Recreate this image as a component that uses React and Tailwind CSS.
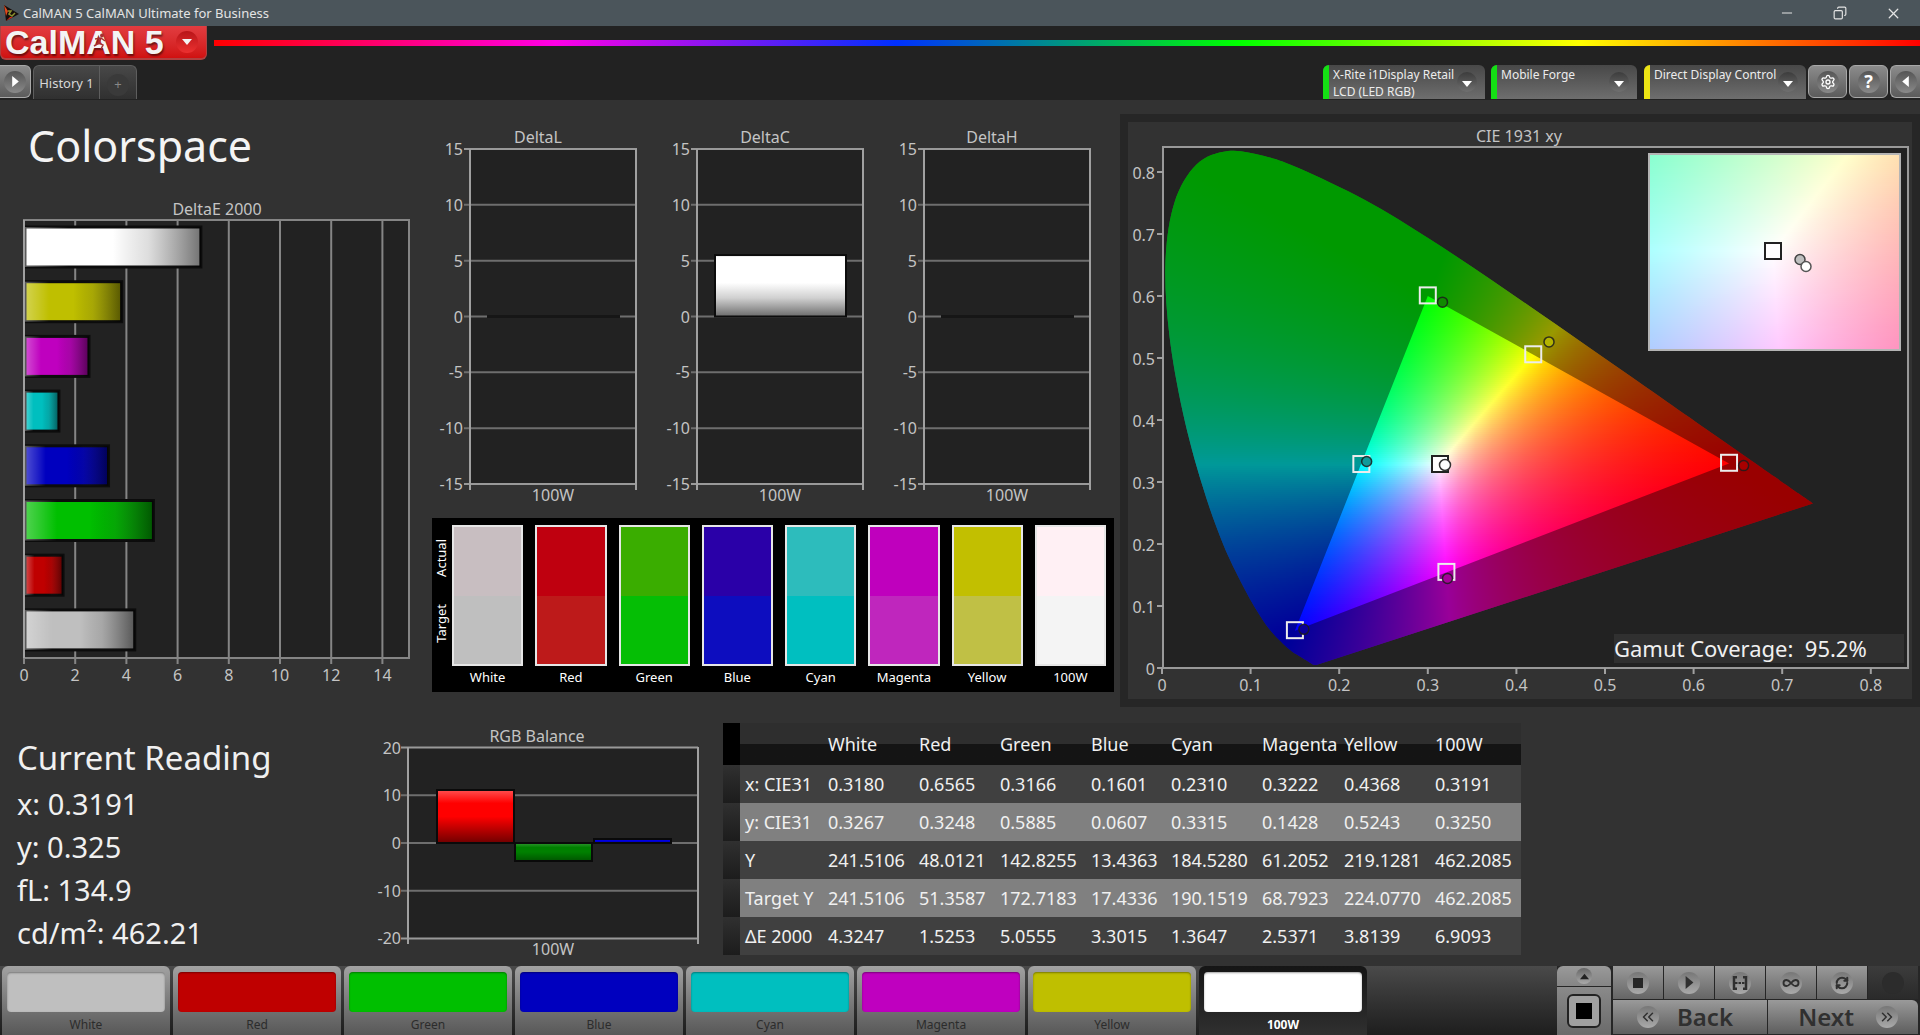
import React, { useMemo } from "react";
import { Minus, X, Copy, Settings, ChevronsLeft, ChevronsRight, RefreshCw, Infinity as InfinityIcon } from "lucide-react";

const BARS = [
  { name: "100W", color: "#ffffff", value: 6.9093 },
  { name: "Yellow", color: "#bfbf00", value: 3.8139 },
  { name: "Magenta", color: "#bf00bf", value: 2.5371 },
  { name: "Cyan", color: "#00bfbf", value: 1.3647 },
  { name: "Blue", color: "#0000bf", value: 3.3015 },
  { name: "Green", color: "#00bf00", value: 5.0555 },
  { name: "Red", color: "#bf0000", value: 1.5253 },
  { name: "White", color: "#bfbfbf", value: 4.3247 },
];

const SWATCHES = [
  { name: "White", actual: "bg-[#c8bec1]", target: "bg-[#bfbfbf]" },
  { name: "Red", actual: "bg-[#bf000f]", target: "bg-[#bd1a1a]" },
  { name: "Green", actual: "bg-[#3aad00]", target: "bg-[#05be05]" },
  { name: "Blue", actual: "bg-[#2a00a8]", target: "bg-[#0d0dbf]" },
  { name: "Cyan", actual: "bg-[#2dbcbc]", target: "bg-[#00bfc0]" },
  { name: "Magenta", actual: "bg-[#bf00bd]", target: "bg-[#bf26bd]" },
  { name: "Yellow", actual: "bg-[#c2bf00]", target: "bg-[#c0c045]" },
  { name: "100W", actual: "bg-[#fff0f4]", target: "bg-[#f4f4f4]" },
];

const PATTERNS = [
  { name: "White", color: "bg-[#bfbfbf]" },
  { name: "Red", color: "bg-[#bf0000]" },
  { name: "Green", color: "bg-[#00bf00]" },
  { name: "Blue", color: "bg-[#0000bf]" },
  { name: "Cyan", color: "bg-[#00bfbf]" },
  { name: "Magenta", color: "bg-[#bf00bf]" },
  { name: "Yellow", color: "bg-[#bfbf00]" },
  { name: "100W", color: "bg-white", active: true },
];

const COLUMNS = ["White", "Red", "Green", "Blue", "Cyan", "Magenta", "Yellow", "100W"];
const ROWS = [
  ["x: CIE31", "0.3180", "0.6565", "0.3166", "0.1601", "0.2310", "0.3222", "0.4368", "0.3191"],
  ["y: CIE31", "0.3267", "0.3248", "0.5885", "0.0607", "0.3315", "0.1428", "0.5243", "0.3250"],
  ["Y", "241.5106", "48.0121", "142.8255", "13.4363", "184.5280", "61.2052", "219.1281", "462.2085"],
  ["Target Y", "241.5106", "51.3587", "172.7183", "17.4336", "190.1519", "68.7923", "224.0770", "462.2085"],
  ["ΔE 2000", "4.3247", "1.5253", "5.0555", "3.3015", "1.3647", "2.5371", "3.8139", "6.9093"],
];

// spectral locus, CIE 1931 2°
const LOCUS = [
  [0.1741, 0.005], [0.1714, 0.0051], [0.1689, 0.0069], [0.1644, 0.0109], [0.1566, 0.0177], [0.144, 0.0297],
  [0.1241, 0.0578], [0.1096, 0.0868], [0.0913, 0.1327], [0.0687, 0.2007], [0.0454, 0.295], [0.0235, 0.4127],
  [0.0082, 0.5384], [0.0039, 0.6548], [0.0139, 0.7502], [0.0389, 0.812], [0.0743, 0.8338], [0.1142, 0.8262],
  [0.1547, 0.8059], [0.2296, 0.7543], [0.3016, 0.6923], [0.3731, 0.6245], [0.4441, 0.5547], [0.5125, 0.4866],
  [0.5752, 0.4242], [0.627, 0.3725], [0.6658, 0.334], [0.6915, 0.3083], [0.719, 0.2809], [0.7347, 0.2653],
];

// lines where the colour field has a crease: gamut edges, and white to yellow / magenta
const CREASES = [
  [0.3127, 0.329, 0.4193, 0.5053],
  [0.3127, 0.329, 0.3209, 0.1542],
  [0.3, 0.6, 0.15, 0.06],
  [0.3, 0.6, 0.64, 0.33],
  [0.15, 0.06, 0.64, 0.33],
];

const px = (x) => 1162 + 886 * x;
const py = (y) => 668 - 620 * y;

// smooth closed outline, the purple line stays straight
function locusPath() {
  const p = LOCUS.map(([x, y]) => [px(x), py(y)]);
  let d = `M${p[0][0]} ${p[0][1]}`;
  for (let i = 0; i < p.length - 1; i++) {
    const a = p[Math.max(i - 1, 0)];
    const b = p[i];
    const c = p[i + 1];
    const e = p[Math.min(i + 2, p.length - 1)];
    d += ` C${b[0] + (c[0] - a[0]) / 6} ${b[1] + (c[1] - a[1]) / 6} ${c[0] - (e[0] - b[0]) / 6} ${c[1] - (e[1] - b[1]) / 6} ${c[0]} ${c[1]}`;
  }
  return d + " Z";
}

function xyToRgb(x, y) {
  const yy = Math.max(y, 0.001);
  const X = x / yy;
  const Z = (1 - x - yy) / yy;
  const rgb = [
    3.2406 * X - 1.5372 - 0.4986 * Z,
    -0.9689 * X + 1.8758 + 0.0415 * Z,
    0.0557 * X - 0.204 + 1.057 * Z,
  ].map((v) => Math.max(v, 0));
  const max = Math.max(...rgb);
  return `rgb(${rgb.map((v) => Math.round((v / max) * 255)).join(",")})`;
}

function ChromaField({ id, left, top, width, height, toX, toY, strip, stops }) {
  const rows = useMemo(() => {
    const list = [];
    const x0 = toX(left);
    const span = toX(left + width) - x0;
    for (let y = 0; y < height; y += strip) {
      const cy = toY(top + y + strip / 2);
      const offsets = [];
      for (let i = 0; i <= stops; i++) offsets.push(i / stops);
      CREASES.forEach(([ax, ay, bx, by]) => {
        const o = (ax + ((cy - ay) * (bx - ax)) / (by - ay) - x0) / span;
        if (o > 0 && o < 1) offsets.push(o);
      });
      offsets.sort((a, b) => a - b);
      list.push({
        y: top + y,
        h: Math.min(strip, height - y),
        colors: offsets.map((o) => [o, xyToRgb(x0 + o * span, cy)]),
      });
    }
    return list;
  }, []);

  return (
    <g shapeRendering="crispEdges">
      {rows.map((row, r) => (
        <React.Fragment key={r}>
          <linearGradient id={`${id}${r}`}>
            {row.colors.map(([o, c], i) => (
              <stop key={i} offset={o} stopColor={c} />
            ))}
          </linearGradient>
          <rect x={left} y={row.y} width={width} height={row.h} fill={`url(#${id}${r})`} />
        </React.Fragment>
      ))}
    </g>
  );
}

function Label({ x, y, anchor = "middle", children }) {
  return (
    <text x={x} y={y} textAnchor={anchor} className="fill-[#c4c4c4] text-[16px]">
      {children}
    </text>
  );
}

function DeltaEChart() {
  const sx = (v) => 24 + v * 25.6;
  return (
    <svg viewBox="0 195 430 500" className="block w-full" role="img" aria-label="DeltaE 2000">
      <defs>
        <linearGradient id="barShade">
          <stop offset="0" stopColor="#fff" stopOpacity="0.32" />
          <stop offset="0.25" stopColor="#fff" stopOpacity="0" />
          <stop offset="0.5" stopColor="#000" stopOpacity="0" />
          <stop offset="0.7" stopColor="#222" stopOpacity="0.15" />
          <stop offset="1" stopColor="#000" stopOpacity="0.55" />
        </linearGradient>
      </defs>
      <Label x={217} y={215}>DeltaE 2000</Label>
      <rect x="24" y="220" width="385" height="438" fill="#222" />
      {[0, 2, 4, 6, 8, 10, 12, 14].map((t) => (
        <g key={t}>
          <line x1={sx(t)} x2={sx(t)} y1="220" y2="664" stroke="#858585" strokeWidth="2" />
          <Label x={sx(t)} y={681}>{t}</Label>
        </g>
      ))}
      <rect x="24" y="220" width="385" height="438" fill="none" stroke="#858585" strokeWidth="2" />
      {BARS.map((b, i) => (
        <g key={b.name}>
          <rect x="25" y={227 + i * 54.7} width={b.value * 25.6 - 1} height="40" fill={b.color} stroke="#0c0c0c" strokeWidth="3" />
          <rect x="25" y={227 + i * 54.7} width={b.value * 25.6 - 1} height="40" fill="url(#barShade)" />
        </g>
      ))}
      <line x1="24" x2="24" y1="220" y2="658" stroke="#a0a0a0" strokeWidth="2" />
    </svg>
  );
}

function DeltaChart({ title, value }) {
  const sy = (v) => 316.5 - v * 11.17;
  return (
    <svg viewBox="0 125 227 383" className="block w-full" role="img" aria-label={title}>
      <defs>
        <linearGradient id="whiteBar" x2="0" y2="1">
          <stop offset="0.45" stopColor="#fff" />
          <stop offset="0.7" stopColor="#d0d0d0" />
          <stop offset="1" stopColor="#6c6c6c" />
        </linearGradient>
      </defs>
      <Label x={104} y={143}>{title}</Label>
      <rect x="36" y="149" width="167" height="335" fill="#222" />
      {[15, 10, 5, 0, -5, -10, -15].map((t) => (
        <g key={t}>
          <line x1="30" x2="203" y1={sy(t)} y2={sy(t)} stroke={Math.abs(t) === 15 ? "#999" : "#6e6e6e"} strokeWidth="2" />
          <Label x={29} y={sy(t) + 6} anchor="end">{t}</Label>
        </g>
      ))}
      <line x1="36" x2="36" y1="149" y2="490" stroke="#a0a0a0" strokeWidth="2" />
      <line x1="202" x2="202" y1="149" y2="490" stroke="#a0a0a0" strokeWidth="2" />
      {value ? (
        <rect x="54" y={sy(value)} width="131" height={value * 11.17} fill="url(#whiteBar)" stroke="#0c0c0c" strokeWidth="2" />
      ) : (
        <line x1="53" x2="186" y1={sy(0)} y2={sy(0)} stroke="#161616" strokeWidth="3" />
      )}
      <Label x={119} y={501}>100W</Label>
    </svg>
  );
}

function RgbBalance() {
  const sy = (v) => 843 - v * 4.77;
  const bars = [
    { x: 437, y: 790, h: 53, id: "balR", color: "#ff0000", top: "#ff5050", end: "#700000" },
    { x: 515, y: 843, h: 18, id: "balG", color: "#008000", top: "#2f962f", end: "#005500" },
    { x: 594, y: 839, h: 4, id: "balB", color: "#0000e0", top: "#2020ff", end: "#000090" },
  ];
  return (
    <svg viewBox="372 725 351 235" className="block w-full" role="img" aria-label="RGB Balance">
      <Label x={537} y={742}>RGB Balance</Label>
      <rect x="407" y="747" width="291" height="191" fill="#222" />
      {[20, 10, 0, -10, -20].map((t) => (
        <g key={t}>
          <line x1="401" x2="698" y1={sy(t)} y2={sy(t)} stroke={Math.abs(t) === 20 ? "#999" : "#6e6e6e"} strokeWidth="2" />
          <Label x={401} y={sy(t) + 6} anchor="end">{t}</Label>
        </g>
      ))}
      <line x1="408" x2="408" y1="747" y2="944" stroke="#a0a0a0" strokeWidth="2" />
      <line x1="698" x2="698" y1="747" y2="944" stroke="#a0a0a0" strokeWidth="2" />
      {bars.map((b) => (
        <g key={b.id}>
          <linearGradient id={b.id} x2="0" y2="1">
            <stop offset="0" stopColor={b.top} />
            <stop offset="0.25" stopColor={b.color} />
            <stop offset="0.5" stopColor={b.color} />
            <stop offset="1" stopColor={b.end} />
          </linearGradient>
          <rect x={b.x} y={b.y} width="77" height={b.h} fill={`url(#${b.id})`} stroke="#0a0a0a" strokeWidth="2" />
        </g>
      ))}
      <Label x={553} y={955}>100W</Label>
    </svg>
  );
}

const TARGETS = [[0.3, 0.601], [0.419, 0.506], [0.64, 0.331], [0.225, 0.329], [0.321, 0.155], [0.15, 0.061]];
const MEASURED = [
  [0.3166, 0.5885, "#108a00"], [0.4368, 0.5243, "#b4b400"], [0.6565, 0.3248, "#a80000"],
  [0.231, 0.3315, "#109a9a"], [0.3222, 0.1428, "#a8009c"], [0.1601, 0.0607, "#0a0098"],
];

function CieChart() {
  const outline = useMemo(locusPath, []);
  const triangle = `M${px(0.3)} ${py(0.6)} L${px(0.64)} ${py(0.33)} L${px(0.15)} ${py(0.06)} Z`;
  const tenths = [0, 1, 2, 3, 4, 5, 6, 7, 8];
  return (
    <svg viewBox="1128 122 784 577" className="block w-full" role="img" aria-label="CIE 1931 xy">
      <defs>
        <clipPath id="locus">
          <path d={outline} />
        </clipPath>
      </defs>
      <Label x={1519} y={142}>CIE 1931 xy</Label>
      <rect x="1163" y="147" width="745" height="521" fill="#222" stroke="#999" strokeWidth="2" />
      {tenths.map((t) => (
        <g key={t}>
          <line x1={px(t / 10)} x2={px(t / 10)} y1="668" y2="674" stroke="#a0a0a0" strokeWidth="2" />
          <line x1="1157" x2="1163" y1={py(t / 10)} y2={py(t / 10)} stroke="#a0a0a0" strokeWidth="2" />
          <Label x={px(t / 10)} y={691}>{t / 10}</Label>
          <Label x={1155} y={py(t / 10) + 7} anchor="end">{t / 10}</Label>
        </g>
      ))}
      <g clipPath="url(#locus)">
        <ChromaField
          id="cie" left={1162} top={148} width={660} height={520} strip={2} stops={40}
          toX={(v) => (v - 1162) / 886} toY={(v) => (668 - v) / 620}
        />
        <path d={`M1160 140 H1830 V670 H1160 Z ${triangle}`} fillRule="evenodd" fill="#000" fillOpacity="0.4" />
      </g>
      {TARGETS.map(([x, y]) => (
        <rect key={x} x={px(x) - 8} y={py(y) - 8} width="16" height="16" fill="none" stroke="#ececec" strokeWidth="2" />
      ))}
      {MEASURED.map(([x, y, c]) => (
        <circle key={x} cx={px(x)} cy={py(y) - 1} r="5" fill={c} stroke="#1c1c1c" strokeOpacity="0.85" strokeWidth="1.5" />
      ))}
      <rect x="1432" y="456" width="16" height="16" fill="#fff" stroke="#222" strokeWidth="2" />
      <circle cx="1445" cy="465" r="5.5" fill="#fff" stroke="#333" strokeWidth="1.5" />

      {/* magnified white point */}
      <ChromaField
        id="wp" left={1649} top={154} width={251} height={196} strip={2} stops={20}
        toX={(v) => 0.3127 + (v - 1773) / 5150} toY={(v) => 0.329 - (v - 251) / 4000}
      />
      <rect x="1649" y="154" width="251" height="196" fill="none" stroke="#b4b4b4" strokeWidth="2" />
      <rect x="1765" y="243" width="16" height="16" fill="#fff" stroke="#222" strokeWidth="2" />
      <circle cx="1800" cy="259.5" r="5" fill="#bfbfbf" stroke="#444" strokeWidth="1.5" />
      <circle cx="1806" cy="266.5" r="5" fill="#fff" stroke="#555" strokeWidth="1.5" />

      <rect x="1614" y="634" width="290" height="29" fill="#303030" />
      <text x="1614" y="657" className="fill-[#f0f0f0] text-[22px]">{"Gamut Coverage:\u00a0 95.2%"}</text>
    </svg>
  );
}

function ColorPatches() {
  return (
    <div className="ml-0.5 mr-1.5 mt-2.5 flex h-[174px] bg-black pr-2 pt-[7px] text-[13px] text-white">
      <div className="flex w-[18px] flex-col items-center justify-around pb-9 leading-[18px]">
        <span className="rotate-180 [writing-mode:vertical-rl]">Actual</span>
        <span className="rotate-180 [writing-mode:vertical-rl]">Target</span>
      </div>
      <div className="grid flex-1 grid-cols-8 gap-3 pl-0.5">
        {SWATCHES.map((s) => (
          <div key={s.name} className="flex flex-col items-center">
            <div className="flex h-[141px] w-full flex-col border-2 border-[#e6e6e6]">
              <div className={`flex-1 ${s.actual}`} />
              <div className={`flex-1 ${s.target}`} />
            </div>
            <span className="leading-[22px]">{s.name}</span>
          </div>
        ))}
      </div>
    </div>
  );
}

function ResultsTable() {
  return (
    <table className="mt-4 w-2/3 table-fixed border-collapse text-left text-[18px] text-[#f0f0f0]">
      <colgroup>
        <col className="w-[17px]" />
        <col className="w-[83px]" />
        <col className="w-[91px]" />
        <col className="w-[81px]" />
        <col className="w-[91px]" />
        <col className="w-[80px]" />
        <col className="w-[91px]" />
        <col className="w-[82px]" />
        <col className="w-[91px]" />
        <col className="w-[91px]" />
      </colgroup>
      <thead>
        <tr className="h-[42px] bg-linear-to-b from-[#2e2e2e] from-50% to-[#141414] to-50%">
          <td className="bg-black" />
          <td />
          {COLUMNS.map((c) => (
            <th key={c} scope="col" className="whitespace-nowrap pl-[5px] font-normal">{c}</th>
          ))}
        </tr>
      </thead>
      <tbody>
        {ROWS.map((row) => (
          <tr key={row[0]} className="h-[38px] bg-[#404040] even:bg-[#808080]">
            <td className="bg-linear-to-b from-[#303030] to-[#1c1c1c]" />
            {row.map((cell, i) =>
              i === 0 ? (
                <th key={i} scope="row" className="whitespace-nowrap pl-[5px] font-normal">{cell}</th>
              ) : (
                <td key={i} className="whitespace-nowrap pl-[5px]">{cell}</td>
              )
            )}
          </tr>
        ))}
      </tbody>
    </table>
  );
}

function Triangle({ dir, className }) {
  const d = { down: "M0 2 H10 L5 8 Z", up: "M0 8 H10 L5 2 Z", right: "M2 0 L8 5 L2 10 Z", left: "M8 0 L2 5 L8 10 Z" }[dir];
  return (
    <svg viewBox="0 0 10 10" className={className} aria-hidden="true">
      <path d={d} fill="currentColor" />
    </svg>
  );
}

function DeviceMenu({ className, bar, lines }) {
  return (
    <button type="button" aria-haspopup="menu" className={`flex h-[34px] overflow-hidden rounded-t-md bg-linear-to-b from-[#484848] to-[#6e6e6e] text-left ${className}`}>
      <span className={`h-full w-[6px] shrink-0 ${bar}`} />
      <span className="flex-1 whitespace-nowrap pl-1 pt-px text-[12px] leading-[17px] text-[#ececec]">
        {lines.map((l) => (
          <span key={l} className="block">{l}</span>
        ))}
      </span>
      <span className="mr-2 mt-[7px] flex size-5 shrink-0 items-center justify-center rounded-full bg-linear-to-b from-[#3c3c3c] to-[#707070] text-white">
        <Triangle dir="down" className="mt-1 size-[10px]" />
      </span>
    </button>
  );
}

function RoundKey({ label, className, children }) {
  return (
    <button type="button" aria-label={label} className={`flex h-[33px] items-center justify-center border border-[#a8a8a8] bg-linear-to-b from-[#8c8c8c] to-[#5c5c5c] text-white ${className}`}>
      <span className="flex size-[22px] items-center justify-center rounded-full bg-linear-to-b from-[#555] to-[#8a8a8a]">{children}</span>
    </button>
  );
}

function TransportKey({ label, children }) {
  return (
    <button type="button" aria-label={label} className="flex flex-1 items-center justify-center bg-linear-to-b from-[#9a9a9a] to-[#666] text-[#303030]">
      <span className="flex size-[22px] items-center justify-center rounded-full bg-linear-to-b from-[#777] to-[#aaa]">{children}</span>
    </button>
  );
}

function Header() {
  return (
    <header>
      <div className="flex h-[26px] items-center bg-[#4b555b] text-[#e4e4e4]">
        <svg viewBox="0 0 16 18" className="ml-[3px] h-[18px] w-4" aria-hidden="true">
          <path d="M1 1 L16 10 L3 17 Z" fill="#160d0a" />
          <path d="M1 1 L5 7 L3 12 Z" fill="#e0481c" />
          <path d="M5 7 L8 7 L6 10 L9 12 L12 9" fill="none" stroke="#8a9030" strokeWidth="1.5" />
          <path d="M3 17 L7 13 L10 13 Z" fill="#d82818" />
        </svg>
        <h1 className="ml-1 pt-px text-[13px]">CalMAN 5 CalMAN Ultimate for Business</h1>
        <div className="ml-auto flex items-center gap-[38px] pr-[18px]">
          <button type="button" aria-label="Minimize"><Minus size={16} strokeWidth={1.5} /></button>
          <button type="button" aria-label="Restore"><Copy size={14} strokeWidth={2} className="-scale-x-100" /></button>
          <button type="button" aria-label="Close"><X size={17} strokeWidth={1.75} /></button>
        </div>
      </div>

      <div className="flex h-[39px] bg-[#222]">
        <button type="button" aria-haspopup="menu" className="flex h-[34px] w-[207px] shrink-0 items-center rounded-b-md border-x border-b-2 border-[#b04040] bg-linear-to-b from-[#e23c40] to-[#d01010] pl-1 text-[#f4f4f4]">
          <span className="relative font-['Liberation_Sans'] text-[34px] font-bold leading-[30px] [text-shadow:1px_2px_2px_#00000080]">
            CalMAN 5
            {/* running figure over the A */}
            <svg viewBox="0 0 14 18" className="absolute left-[88px] top-1.5 h-[18px] w-3.5" fill="none" stroke="#a83030" strokeWidth="1.5" aria-hidden="true">
              <circle cx="9" cy="2.5" r="1.2" fill="#a83030" />
              <path d="M2 6 L8 5 L12 8 M8 5 L6 10 L10 12 L8 16 M6 10 L1 13" />
            </svg>
          </span>
          <span className="ml-auto mr-2 flex size-[22px] items-center justify-center rounded-full bg-linear-to-b from-[#b81418] to-[#ec3030]">
            <Triangle dir="down" className="size-[10px]" />
          </span>
        </button>
        <div className="ml-[7px] mt-3.5 h-1.5 flex-1 bg-[linear-gradient(to_right,#ff0000,#ff00e6_20%,#0030ff_40%,#00ff00_60%,#ffff00_80%,#ff0000)]" />
      </div>

      <div className="flex h-[35px] items-start bg-[#222]">
        <RoundKey label="Expand" className="w-[31px] rounded-r-md border-l-0">
          <Triangle dir="right" className="size-[11px]" />
        </RoundKey>
        <nav className="ml-0.5 flex h-[34px] rounded-t-md border border-b-0 border-[#5e5e5e] bg-linear-to-b from-[#484848] to-[#303030] text-[#d8d8d8]">
          <button type="button" className="w-[65px] pt-0.5 text-[13px]">History 1</button>
          <button type="button" aria-label="Add history" className="flex w-[37px] items-center justify-center border-l border-[#5e5e5e] pt-1">
            <span className="flex size-[22px] items-center justify-center rounded-full bg-[#3a3a3a] text-[13px] text-[#888]">+</span>
          </button>
        </nav>
        <div className="ml-auto flex">
          <DeviceMenu className="mr-1.5 w-[162px]" bar="bg-[#14e014]" lines={["X-Rite i1Display Retail", "LCD (LED RGB)"]} />
          <DeviceMenu className="mr-[7px] w-[146px]" bar="bg-[#14e014]" lines={["Mobile Forge"]} />
          <DeviceMenu className="mr-0.5 w-[162px]" bar="bg-[#ece414]" lines={["Direct Display Control"]} />
          <RoundKey label="Settings" className="mr-0.5 w-[39px] rounded-md"><Settings size={16} /></RoundKey>
          <RoundKey label="Help" className="mr-0.5 w-[39px] rounded-md"><span className="text-[18px] font-bold">?</span></RoundKey>
          <RoundKey label="Collapse" className="w-[30px] rounded-l-md border-r-0"><Triangle dir="left" className="size-[11px]" /></RoundKey>
        </div>
      </div>
    </header>
  );
}

function Footer() {
  return (
    <footer className="flex h-[69px] bg-linear-to-b from-[#4a4a4a] to-[#1e1e1e] pl-0.5">
      <div className="flex gap-[3px]">
        {PATTERNS.map((p) => (
          <button
            key={p.name}
            type="button"
            className={`flex w-[168px] flex-col items-center rounded-t-md px-[5px] pt-1.5 text-[12px] ${
              p.active
                ? "bg-linear-to-b from-[#151515] to-[#303030] font-bold text-white"
                : "bg-linear-to-b from-[#a2a2a2] to-[#585858] text-[#2c2c2c]"
            }`}
          >
            <span className={`h-10 w-full rounded-[4px] shadow-[inset_0_1px_2px_#00000060] ${p.color}`} />
            <span className="mt-1 leading-[18px]">{p.name}</span>
          </button>
        ))}
      </div>

      <div className="ml-auto flex gap-0.5 bg-[#262626] pr-0.5">
        <div className="flex w-[54px] flex-col gap-px">
          <button type="button" aria-label="Show list" className="flex h-5 items-center justify-center rounded-t-md bg-linear-to-b from-[#9a9a9a] to-[#858585]">
            <span className="flex size-4 items-center justify-center rounded-full bg-linear-to-b from-[#666] to-[#aaa] text-[#222]">
              <Triangle dir="up" className="size-[9px]" />
            </span>
          </button>
          <button type="button" aria-label="Pattern window" className="flex flex-1 items-center justify-center bg-linear-to-b from-[#8a8a8a] to-[#6a6a6a]">
            <span className="flex size-[34px] items-center justify-center rounded-md border-2 border-[#222] bg-[#a0a0a0]">
              <span className="size-4 bg-black" />
            </span>
          </button>
        </div>
        <div className="flex w-[305px] flex-col gap-px">
          <div className="flex h-[33px] gap-px">
            <TransportKey label="Stop"><span className="size-[10px] bg-[#262626]" /></TransportKey>
            <TransportKey label="Play"><Triangle dir="right" className="size-[13px]" /></TransportKey>
            <TransportKey label="Read series">
              <svg viewBox="0 0 16 14" className="h-[14px] w-4" fill="none" stroke="currentColor" strokeWidth="2.5" aria-hidden="true">
                <path d="M5 1.2 H2 V12.8 H5 M11 1.2 H14 V12.8 H11" />
                <path d="M3 7 H13" strokeDasharray="2.5 1" strokeWidth="2" />
              </svg>
            </TransportKey>
            <TransportKey label="Read continuous"><InfinityIcon size={18} strokeWidth={2.5} /></TransportKey>
            <TransportKey label="Refresh"><RefreshCw size={14} strokeWidth={3.5} /></TransportKey>
            <div className="flex flex-1 items-center justify-center bg-linear-to-b from-[#3c3c3c] to-[#2a2a2a]">
              <span className="size-[22px] rounded-full bg-[#2c2c2c]" />
            </div>
          </div>
          <div className="flex h-[34px] gap-px text-[24px] font-semibold leading-[34px] text-[#303030]">
            <button type="button" className="flex flex-1 items-center bg-linear-to-b from-[#9a9a9a] to-[#5e5e5e] pl-6">
              <span className="mr-[18px] flex size-[22px] items-center justify-center rounded-full bg-linear-to-b from-[#777] to-[#aaa]"><ChevronsLeft size={18} /></span>
              Back
            </button>
            <button type="button" className="flex flex-1 items-center justify-end rounded-tr-md bg-linear-to-b from-[#9a9a9a] to-[#5e5e5e] pr-5">
              Next
              <span className="ml-[22px] flex size-[22px] items-center justify-center rounded-full bg-linear-to-b from-[#777] to-[#aaa]"><ChevronsRight size={18} /></span>
            </button>
          </div>
        </div>
      </div>
    </footer>
  );
}

export default function App() {
  return (
    <div className="flex min-h-screen flex-col bg-[#323232] font-['Noto_Sans','Open_Sans',sans-serif]">
      <Header />

      <main className="flex-1">
        <section className="grid grid-cols-[430fr_690fr_800fr] items-start">
          <div>
            <h2 className="pl-7 pt-[21px] text-[43px] leading-[50px] text-[#f4f4f4]">Colorspace</h2>
            <div className="mt-6">
              <DeltaEChart />
            </div>
          </div>

          <div className="pt-[25px]">
            <div className="grid grid-cols-3 pl-1 pr-[5px]">
              <DeltaChart title="DeltaL" />
              <DeltaChart title="DeltaC" value={5.5} />
              <DeltaChart title="DeltaH" />
            </div>
            <ColorPatches />
          </div>

          <div className="mt-3.5 border-8 border-[#262626]">
            <CieChart />
          </div>
        </section>

        <section className="grid grid-cols-[372fr_351fr_1197fr] items-start">
          <div className="pl-[17px] pt-[29px] text-[#f0f0f0]">
            <h2 className="text-[33px] leading-[44px]">Current Reading</h2>
            <div className="pt-0.5 text-[29px] leading-[43px]">
              <p>x: 0.3191</p>
              <p>y: 0.325</p>
              <p>fL: 134.9</p>
              <p>cd/m²: 462.21</p>
            </div>
          </div>
          <div className="mt-[18px]">
            <RgbBalance />
          </div>
          <ResultsTable />
        </section>
      </main>

      <Footer />
    </div>
  );
}
